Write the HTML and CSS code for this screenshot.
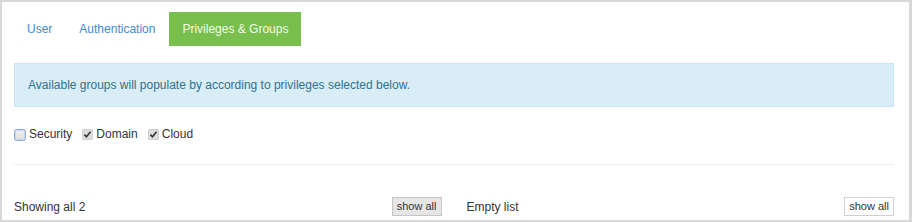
FILE: index.html
```html
<!DOCTYPE html>
<html>
<head>
<meta charset="utf-8">
<link rel="stylesheet" href="styles.css">
</head>
<body>
<div class="frame">
  <ul class="tabs">
    <li><a class="tab">User</a></li>
    <li><a class="tab">Authentication</a></li>
    <li><a class="tab active">Privileges &amp; Groups</a></li>
  </ul>
  <div class="alert">Available groups will populate by according to privileges selected below.</div>
  <div class="checks">
    <label class="check">
      <svg class="box box-empty" width="12" height="12" viewBox="0 0 12 12"><defs><linearGradient id="g1" x1="0" y1="0" x2="0" y2="1"><stop offset="0" stop-color="#f2f2f2"/><stop offset="1" stop-color="#dcdcdc"/></linearGradient></defs><rect x="0.5" y="0.5" width="11" height="11" rx="2" fill="url(#g1)" stroke="#8fa9d6"/><rect x="1.5" y="1.5" width="9" height="9" rx="1.5" fill="none" stroke="#c9d7ef"/></svg>
      <span>Security</span>
    </label>
    <label class="check">
      <svg class="box" width="11" height="11" viewBox="0 0 11 11"><rect x="0" y="0" width="11" height="11" rx="1.5" fill="#dedede"/><rect x="0.5" y="0.5" width="10" height="10" rx="1.5" fill="none" stroke="#cfcfcf"/><path d="M2.4 5.6 L4.4 7.8 L8.6 2.8" fill="none" stroke="#333" stroke-width="1.6"/></svg>
      <span>Domain</span>
    </label>
    <label class="check">
      <svg class="box" width="11" height="11" viewBox="0 0 11 11"><rect x="0" y="0" width="11" height="11" rx="1.5" fill="#dedede"/><rect x="0.5" y="0.5" width="10" height="10" rx="1.5" fill="none" stroke="#cfcfcf"/><path d="M2.4 5.6 L4.4 7.8 L8.6 2.8" fill="none" stroke="#333" stroke-width="1.6"/></svg>
      <span>Cloud</span>
    </label>
  </div>
  <hr class="rule">
  <div class="lists">
    <div class="list-head">
      <span>Showing all 2</span>
      <button class="btn btn-gray">show all</button>
    </div>
    <div class="list-head">
      <span>Empty list</span>
      <button class="btn btn-white">show all</button>
    </div>
  </div>
</div>
</body>
</html>
```
FILE: styles.css
```css
* { box-sizing: border-box; }
html, body { margin: 0; padding: 0; background: #fff; }
body {
  font-family: "Liberation Sans", Arial, sans-serif;
  font-size: 12px;
  color: #333;
}
.frame {
  width: 912px;
  height: 222px;
  border: 2px solid #d8d8d8;
  border-right-width: 3px;
  padding: 10px 15px 0 12px;
  overflow: hidden;
}
.tabs {
  list-style: none;
  margin: 0;
  padding: 0;
  display: flex;
  gap: 1px;
}
.tab {
  display: block;
  padding: 10px 13px;
  line-height: 14px;
  color: #428bca;
  text-decoration: none;
}
.tab.active {
  background: #78bf4e;
  color: #f4fbe8;
}
.alert {
  margin-top: 17px;
  background: #d9edf7;
  border: 1px solid #c4e7f3;
  color: #31708f;
  padding: 14px 13px;
  line-height: 14px;
}
.checks {
  display: flex;
  align-items: center;
  gap: 10px;
  margin-top: 20px;
  height: 14px;
}
.check {
  display: flex;
  align-items: center;
  gap: 3px;
  line-height: 14px;
}
.box { display: block; }
.box-empty { margin-top: 1px; }
.rule {
  border: 0;
  border-top: 1px solid #eeeeee;
  margin: 23px 0 0 0;
  height: 0;
}
.lists {
  display: grid;
  grid-template-columns: 1fr 1fr;
  column-gap: 25px;
  margin-top: 32px;
}
.list-head {
  display: flex;
  justify-content: space-between;
  align-items: center;
  line-height: 14px;
}
.btn {
  font-family: "Liberation Sans", Arial, sans-serif;
  font-size: 11px;
  color: #333;
  height: 19px;
  padding: 0 4px;
  line-height: 17px;
  margin: 0;
}
.btn-gray {
  background: #e6e6e6;
  border: 1px solid #c6c6c6;
}
.btn-white {
  background: #fff;
  border: 1px solid #d0d0d0;
}
```
